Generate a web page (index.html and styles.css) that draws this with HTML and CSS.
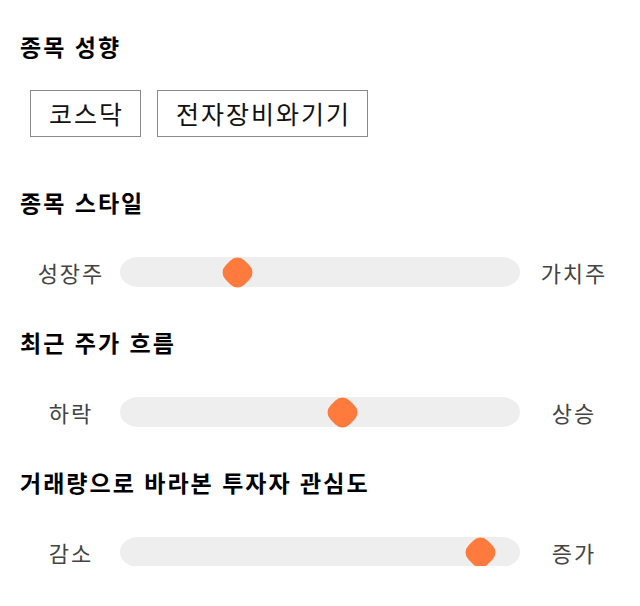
FILE: index.html
```html
<!DOCTYPE html>
<html lang="ko">
<head>
  <meta charset="UTF-8">
  <meta name="viewport" content="width=device-width, initial-scale=1.0">
  <title>종목 분석</title>
  <link rel="stylesheet" href="styles.css">
</head>
<body>
  <main class="panel">
    <section class="block block-tags">
      <h2 class="title">종목 성향</h2>
      <div class="tags">
        <span class="tag">코스닥</span>
        <span class="tag">전자장비와기기</span>
      </div>
    </section>

    <section class="block">
      <h2 class="title">종목 스타일</h2>
      <div class="scale">
        <span class="label">성장주</span>
        <div class="track"><span class="thumb" style="--v: 0.276"></span></div>
        <span class="label label-end">가치주</span>
      </div>
    </section>

    <section class="block">
      <h2 class="title">최근 주가 흐름</h2>
      <div class="scale">
        <span class="label">하락</span>
        <div class="track"><span class="thumb" style="--v: 0.562"></span></div>
        <span class="label label-end">상승</span>
      </div>
    </section>

    <section class="block">
      <h2 class="title">거래량으로 바라본 투자자 관심도</h2>
      <div class="scale">
        <span class="label">감소</span>
        <div class="track"><span class="thumb" style="--v: 0.935"></span></div>
        <span class="label label-end">증가</span>
      </div>
    </section>
  </main>
</body>
</html>
```

FILE: styles.css
```css
* {
  margin: 0;
  padding: 0;
  box-sizing: border-box;
}
body {
  background: #fff;
  font-family: "Noto Sans CJK KR", "Noto Sans", sans-serif;
  color: #000;
}
.panel {
  padding: 31px 20px 0;
  display: flex;
  flex-direction: column;
  gap: 41px;
}
.block-tags {
  margin-bottom: 9px;
}
.title {
  font-size: 23px;
  font-weight: 700;
  line-height: 30px;
  letter-spacing: 2px;
  margin-bottom: 39px;
}
.block-tags .title {
  margin-bottom: 29px;
}
.tags {
  display: flex;
  gap: 16px;
  padding-left: 10px;
}
.tag {
  display: inline-block;
  height: 47px;
  line-height: 45px;
  padding: 0 16px 0 18px;
  border: 1px solid #8a8a8a;
  font-size: 25px;
  letter-spacing: 2px;
  color: #111;
}
.scale {
  display: grid;
  grid-template-columns: 100px 400px 1fr;
  align-items: center;
  height: 30px;
}
.label {
  text-align: center;
  font-size: 22px;
  letter-spacing: 2px;
  padding-left: 2px;
  color: #444;
}
.label-end {
  padding-left: 8px;
}
.track {
  position: relative;
  height: 30px;
  border-radius: 18px / 15px;
  background: #eeeeee;
}
.thumb {
  position: absolute;
  top: 0;
  left: calc(15px + var(--v) * 370px);
  width: 30px;
  height: 30px;
  margin-left: -15px;
}
.thumb::before {
  content: "";
  position: absolute;
  left: 1.5px;
  top: 1.5px;
  width: 27px;
  height: 27px;
  background: #ff7a3d;
  border-radius: 10px;
  transform: rotate(45deg);
}
```
